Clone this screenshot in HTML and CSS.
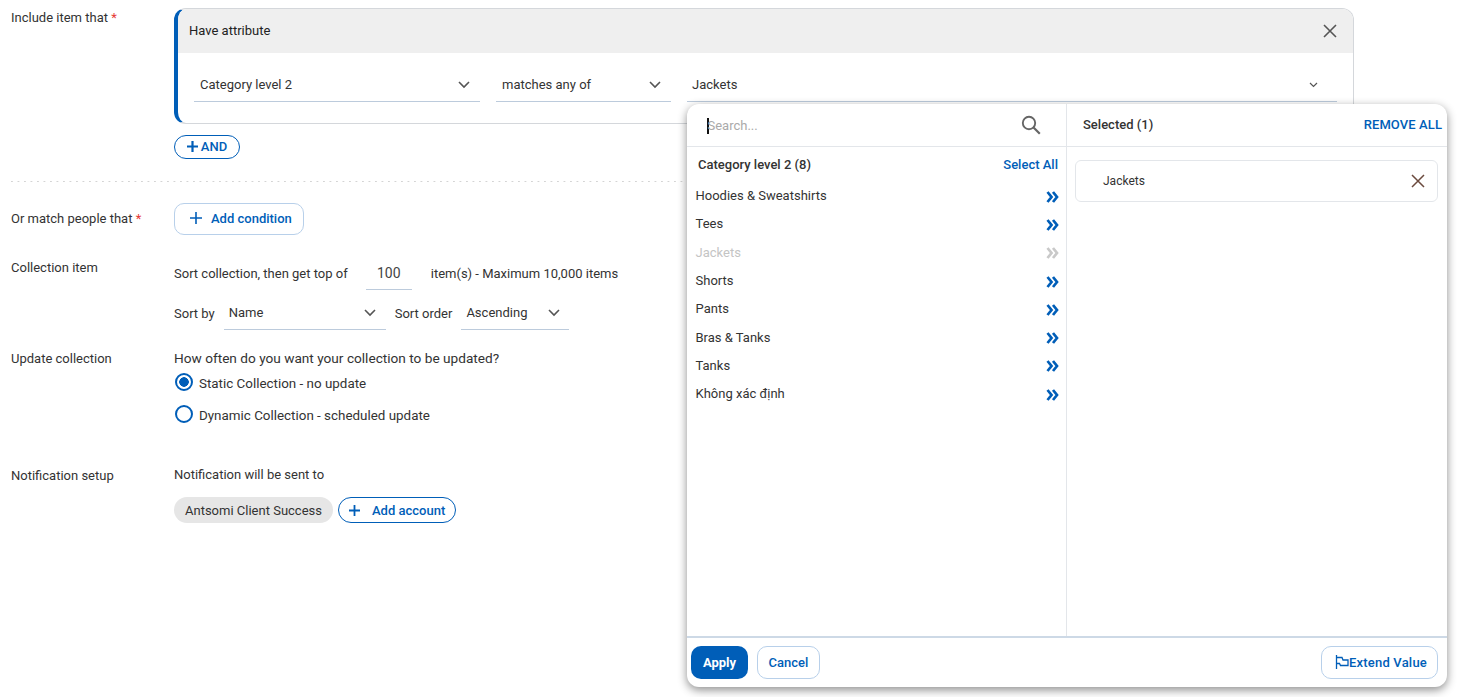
FILE: index.html
```html
<!DOCTYPE html>
<html lang="en">
<head>
    <meta charset="UTF-8">
    <title>Collection setup</title>
    <link rel="stylesheet" href="styles.css">
</head>
<body>
    <div class="form-row row-include">
        <div class="label">Include item that <span class="req">*</span></div>
        <div class="content">
            <div class="card">
                <div class="card-head">
                    <span>Have attribute</span>
                    <svg class="card-close" width="14" height="14" viewBox="0 0 14 14"><path d="M1 1l12 12M13 1L1 13" stroke="#555" stroke-width="1.6" fill="none"/></svg>
                </div>
                <div class="card-body">
                    <div class="select sel-attr"><span>Category level 2</span>
                        <svg class="chev" width="12" height="8" viewBox="0 0 12 8"><path d="M1 1l5 5 5-5" stroke="#555" stroke-width="1.6" fill="none"/></svg>
                    </div>
                    <div class="select sel-op"><span>matches any of</span>
                        <svg class="chev" width="12" height="8" viewBox="0 0 12 8"><path d="M1 1l5 5 5-5" stroke="#555" stroke-width="1.6" fill="none"/></svg>
                    </div>
                    <div class="select sel-value"><span>Jackets</span>
                        <svg class="chev" width="9" height="6" viewBox="0 0 9 6"><path d="M1 1l3.500 3.500L8 1" stroke="#555" stroke-width="1.200" fill="none"/></svg>
                    </div>
                </div>
            </div>
            <button class="pill btn-and"><svg width="11" height="11" viewBox="0 0 11 11"><path d="M5.500 0v11M0 5.500h11" stroke="#005eb8" stroke-width="2.200"/></svg>AND</button>
        </div>
    </div>

    <div class="divider"></div>

    <div class="form-row row-match">
        <div class="label">Or match people that <span class="req">*</span></div>
        <div class="content">
            <button class="soft-btn btn-condition">
                <svg width="12" height="12" viewBox="0 0 12 12"><path d="M6 0v12M0 6h12" stroke="#005eb8" stroke-width="1.600"/></svg>
                Add condition
            </button>
        </div>
    </div>

    <div class="form-row row-collection">
        <div class="label">Collection item</div>
        <div class="content">
            <div class="inline-line top-line">
                <span>Sort collection, then get top of</span>
                <span class="num-input">100</span>
                <span>item(s) - Maximum 10,000 items</span>
            </div>
            <div class="inline-line sort-line">
                <span>Sort by</span>
                <div class="select sel-sort"><span>Name</span>
                    <svg class="chev" width="12" height="8" viewBox="0 0 12 8"><path d="M1 1l5 5 5-5" stroke="#555" stroke-width="1.600" fill="none"/></svg>
                </div>
                <span>Sort order</span>
                <div class="select sel-order"><span>Ascending</span>
                    <svg class="chev" width="12" height="8" viewBox="0 0 12 8"><path d="M1 1l5 5 5-5" stroke="#555" stroke-width="1.600" fill="none"/></svg>
                </div>
            </div>
        </div>
    </div>

    <div class="form-row row-update">
        <div class="label">Update collection</div>
        <div class="content">
            <div class="question wide">How often do you want your collection to be updated?</div>
            <div class="radio-line"><span class="radio on"></span>Static Collection - no update</div>
            <div class="radio-line second"><span class="radio"></span>Dynamic Collection - scheduled update</div>
        </div>
    </div>

    <div class="form-row row-notify">
        <div class="label">Notification setup</div>
        <div class="content">
            <div class="question">Notification will be sent to</div>
            <div class="chips">
                <span class="chip">Antsomi Client Success</span>
                <button class="pill btn-account">
                    <svg width="11" height="11" viewBox="0 0 11 11"><path d="M5.500 0v11M0 5.500h11" stroke="#005eb8" stroke-width="1.800"/></svg>
                    Add account
                </button>
            </div>
        </div>
    </div>

    <!-- value picker popup -->
    <div class="popup">
        <div class="popup-main">
            <div class="pick-left">
                <div class="search">
                    <span class="caret"></span><span class="placeholder">Search...</span>
                    <svg class="search-icon" width="20" height="20" viewBox="0 0 20 20"><circle cx="8" cy="8" r="6.200" stroke="#666" stroke-width="1.900" fill="none"/><path d="M12.500 12.500l6.300 6.300" stroke="#666" stroke-width="2.200"/></svg>
                </div>
                <div class="list-head">
                    <strong>Category level 2 (8)</strong>
                    <a class="link">Select All</a>
                </div>
                <div class="list">
                    <div class="item"><span>Hoodies &amp; Sweatshirts</span><svg width="13" height="12" viewBox="0 0 13 12"><path d="M1.500 1l4 5-4 5M7 1l4 5-4 5" stroke="#005eb8" stroke-width="2.700" fill="none"/></svg></div>
                    <div class="item"><span>Tees</span><svg width="13" height="12" viewBox="0 0 13 12"><path d="M1.500 1l4 5-4 5M7 1l4 5-4 5" stroke="#005eb8" stroke-width="2.700" fill="none"/></svg></div>
                    <div class="item off"><span>Jackets</span><svg width="13" height="12" viewBox="0 0 13 12"><path d="M1.500 1l4 5-4 5M7 1l4 5-4 5" stroke="#c9c9c9" stroke-width="2.700" fill="none"/></svg></div>
                    <div class="item"><span>Shorts</span><svg width="13" height="12" viewBox="0 0 13 12"><path d="M1.500 1l4 5-4 5M7 1l4 5-4 5" stroke="#005eb8" stroke-width="2.700" fill="none"/></svg></div>
                    <div class="item"><span>Pants</span><svg width="13" height="12" viewBox="0 0 13 12"><path d="M1.500 1l4 5-4 5M7 1l4 5-4 5" stroke="#005eb8" stroke-width="2.700" fill="none"/></svg></div>
                    <div class="item"><span>Bras &amp; Tanks</span><svg width="13" height="12" viewBox="0 0 13 12"><path d="M1.500 1l4 5-4 5M7 1l4 5-4 5" stroke="#005eb8" stroke-width="2.700" fill="none"/></svg></div>
                    <div class="item"><span>Tanks</span><svg width="13" height="12" viewBox="0 0 13 12"><path d="M1.500 1l4 5-4 5M7 1l4 5-4 5" stroke="#005eb8" stroke-width="2.700" fill="none"/></svg></div>
                    <div class="item"><span>Không xác định</span><svg width="13" height="12" viewBox="0 0 13 12"><path d="M1.500 1l4 5-4 5M7 1l4 5-4 5" stroke="#005eb8" stroke-width="2.700" fill="none"/></svg></div>
                </div>
            </div>
            <div class="pick-right">
                <div class="selected-head">
                    <strong>Selected (1)</strong>
                    <a class="link remove">REMOVE ALL</a>
                </div>
                <div class="selected-item">
                    <span>Jackets</span>
                    <svg width="14" height="14" viewBox="0 0 14 14"><path d="M1 1l12 12M13 1L1 13" stroke="#6b4a3e" stroke-width="1.500" fill="none"/></svg>
                </div>
            </div>
        </div>
        <div class="popup-foot">
            <button class="btn-apply">Apply</button>
            <button class="soft-btn btn-cancel">Cancel</button>
            <button class="soft-btn btn-extend">
                <svg width="14" height="16" viewBox="0 0 14 16"><path d="M1.500 1v14M1.500 3.500H7L8 6h5v5.500H5.500l-1-2h-3" stroke="#005eb8" stroke-width="1.300" fill="none"/></svg>
                Extend Value
            </button>
        </div>
    </div>
</body>
</html>
```

FILE: styles.css
```css
html, body {
    height: 100%;
}
body {
    margin: 0;
    height: 697px;
    overflow: hidden;
    position: relative;
    background: #fff;
    color: #333;
    font-family: Roboto, "Noto Sans", sans-serif;
    font-size: 13px;
    line-height: 16px;
}
button {
    font-family: inherit;
    cursor: pointer;
    padding: 0;
}
.form-row {
    display: flex;
    padding-left: 11px;
}
.label {
    width: 163px;
    flex-shrink: 0;
}
.req {
    color: #e53935;
}
.content {
    flex: 1;
    min-width: 0;
}
.row-include {
    padding-top: 8px;
}
.row-include .label {
    padding-top: 2px;
}
.card {
    width: 1180px;
    height: 116px;
    box-sizing: border-box;
    border: 1px solid #d4d7db;
    border-left: 4px solid #005eb8;
    border-radius: 12px;
    overflow: hidden;
}
.card-head {
    height: 44px;
    background: #efefef;
    display: flex;
    align-items: center;
    justify-content: space-between;
    padding: 0 16px 0 11px;
    color: #222;
}
.card-body {
    display: flex;
    gap: 16px;
    padding: 16px 16px 0;
}
.select {
    display: flex;
    justify-content: space-between;
    align-items: center;
    box-sizing: border-box;
    border-bottom: 1px solid #bccbdc;
    height: 33px;
    color: #333;
}
.sel-attr {
    width: 286px;
    padding: 0 10px 0 6px;
}
.sel-op {
    width: 175px;
    padding: 0 10px 0 6px;
}
.sel-value {
    width: 650px;
    padding: 0 19px 0 5px;
}
.pill {
    background: #fff;
    border: 1px solid #005eb8;
    border-radius: 13px;
    color: #005eb8;
    font-size: 13px;
    font-weight: 500;
}
.btn-and {
    display: flex;
    align-items: center;
    justify-content: center;
    gap: 3px;
    width: 66px;
    height: 24px;
    margin-top: 11px;
    padding-bottom: 2px;
}
.divider {
    margin: 22px 0 0 11px;
    height: 1px;
    width: 690px;
    background: linear-gradient(to right, #d4d4d4 2px, transparent 2px) 0 0 / 6.500px 1px repeat-x;
}
.soft-btn {
    display: flex;
    align-items: center;
    background: #fff;
    border: 1px solid #b8d0ea;
    border-radius: 10px;
    color: #005eb8;
    font-size: 13px;
    font-weight: 500;
}
.row-match {
    padding-top: 21px;
    align-items: center;
}
.btn-condition {
    width: 130px;
    height: 32px;
    padding: 0 0 2px 15px;
    gap: 9px;
}
.row-collection {
    padding-top: 24px;
}
.row-collection .label {
    padding-top: 1px;
}
.inline-line {
    display: flex;
    align-items: center;
}
.top-line {
    height: 30px;
}
.num-input {
    width: 46px;
    box-sizing: border-box;
    height: 31px;
    line-height: 29px;
    margin: 0 19px 0 18px;
    text-align: center;
    border-bottom: 1px solid #bccbdc;
    font-size: 14px;
    color: #444;
}
.sort-line {
    margin-top: 9px;
    height: 32px;
}
.sel-sort {
    width: 162px;
    height: 32px;
    margin: 0 9px;
    padding: 0 10px 1px 5px;
}
.sel-order {
    width: 108px;
    height: 32px;
    margin-left: 9px;
    padding: 0 9px 1px 5px;
}
.row-update {
    padding-top: 20px;
}
.row-update .label {
    padding-top: 1px;
}
.question.wide {
    font-size: 13.650px;
}
.radio-line {
    display: flex;
    align-items: center;
    gap: 6.500px;
    margin-top: 8px;
    height: 20px;
    font-size: 13.400px;
}
.radio-line.second {
    margin-top: 12px;
}
.radio {
    width: 18px;
    height: 18px;
    box-sizing: border-box;
    border: 2px solid #005eb8;
    border-radius: 50%;
    background: #fff;
    margin: -4px 0 0 0.500px;
}
.radio.on {
    background: radial-gradient(circle, #005eb8 0 4.500px, #fff 5px);
}
.row-notify {
    padding-top: 41px;
}
.row-notify .label {
    padding-top: 1px;
}
.chips {
    display: flex;
    align-items: center;
    gap: 5px;
    margin-top: 14px;
}
.chip {
    background: #e6e6e6;
    border-radius: 13px;
    height: 26px;
    line-height: 27px;
    padding: 0 11px;
}
.btn-account {
    display: flex;
    align-items: center;
    height: 26px;
    width: 118px;
    padding-left: 10px;
    gap: 12px;
}
.popup {
    position: absolute;
    left: 687px;
    top: 104px;
    width: 760px;
    height: 583px;
    display: flex;
    flex-direction: column;
    background: #fff;
    border-radius: 12px;
    box-shadow: 0 3px 10px rgba(0, 0, 0, 0.45);
    overflow: hidden;
}
.popup-main {
    flex: 1;
    display: flex;
    min-height: 0;
}
.pick-left {
    width: 380px;
    box-sizing: border-box;
    border-right: 1px solid #e3e6ea;
}
.search {
    display: flex;
    align-items: center;
    height: 43px;
    box-sizing: border-box;
    padding: 2px 25px 0 20px;
    border-bottom: 1px solid #e3e6ea;
}
.caret {
    width: 1.500px;
    height: 16px;
    background: #111;
}
.placeholder {
    color: #aaa;
    margin-left: -1px;
    flex: 1;
}
.search-icon {
    margin-top: -3px;
}
.list-head {
    display: flex;
    justify-content: space-between;
    align-items: center;
    padding: 10px 8px 0 11px;
    height: 16px;
}
.list-head strong, .selected-head strong {
    font-weight: 500;
    color: #333;
}
.link {
    color: #005eb8;
    font-weight: 500;
}
.remove {
    letter-spacing: 0.100px;
}
.list {
    margin-top: 9px;
}
.item {
    display: flex;
    justify-content: space-between;
    align-items: center;
    height: 28.300px;
    padding: 0 7px 0 8.500px;
    color: #333;
}
.item svg {
    margin-top: 1px;
}
.item.off {
    color: #c4c4c4;
}
.pick-right {
    flex: 1;
    min-width: 0;
}
.selected-head {
    display: flex;
    justify-content: space-between;
    align-items: center;
    height: 43px;
    box-sizing: border-box;
    padding: 0 5px 0 16px;
    border-bottom: 1px solid #e3e6ea;
}
.selected-item {
    display: flex;
    justify-content: space-between;
    align-items: center;
    margin: 13px 9px 0 8px;
    height: 42px;
    box-sizing: border-box;
    padding: 0 12px 0 27px;
    border: 1px solid #e3e6ea;
    border-radius: 6px;
    font-size: 12px;
}
.popup-foot {
    display: flex;
    align-items: center;
    height: 51px;
    box-sizing: border-box;
    border-top: 2px solid #cdd9e6;
    padding: 0 9px 1px 4px;
}
.btn-apply {
    width: 57px;
    height: 33px;
    border: none;
    border-radius: 10px;
    background: #005eb8;
    color: #fff;
    font-size: 13px;
    font-weight: 700;
}
.btn-cancel {
    justify-content: center;
    width: 63px;
    height: 33px;
    margin-left: 9px;
}
.btn-extend {
    margin-left: auto;
    justify-content: center;
    width: 117px;
    height: 33px;
    padding-left: 3px;
    letter-spacing: 0.200px;
}
```
